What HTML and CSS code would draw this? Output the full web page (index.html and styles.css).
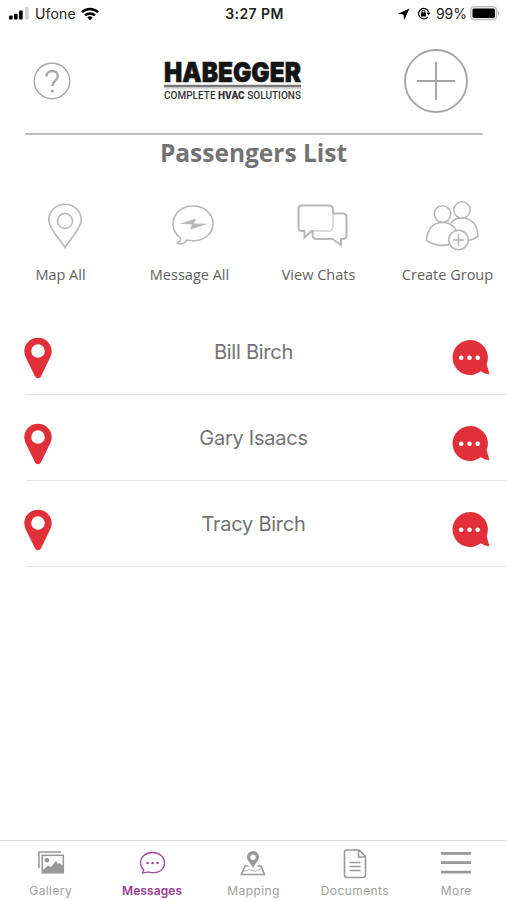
FILE: index.html
```html
<!DOCTYPE html>
<html lang="en">
<head>
<meta charset="utf-8">
<meta name="viewport" content="width=device-width">
<title>Passengers List</title>
<link rel="stylesheet" href="styles.css">
</head>
<body>
<svg class="defs" width="0" height="0" aria-hidden="true">
  <symbol id="pin" viewBox="0 0 28 42"><path fill-rule="evenodd" d="M14 .8C6.3.8.3 6.8.3 14.1c0 3 1 5.800 2.500 8.500l8.300 17c1.100 2.300 4.700 2.300 5.800 0l8.300-17c1.500-2.700 2.500-5.500 2.500-8.500C27.700 6.800 21.700.8 14 .8Zm0 6.400a6.800 6.800 0 1 1 0 13.600 6.800 6.800 0 0 1 0-13.600Z"/></symbol>
  <symbol id="bubble" viewBox="0 0 38 36"><path d="M18 0a17.500 17.500 0 1 0 10.800 31.300c2.500 1.500 5 2.800 7.400 2.900 1 0 1.100-.6.900-1.500l-2.500-8.600A17.500 17.500 0 0 0 18 0Z"/><g fill="#fff"><circle cx="9.200" cy="17.700" r="2.300"/><circle cx="17.500" cy="17.700" r="2.300"/><circle cx="25.700" cy="17.700" r="2.300"/></g></symbol>
</svg>
<div class="screen">
  <div class="status">
    <div class="carrier">
      <svg width="22" height="14" viewBox="0 0 22 14"><rect x="1" y="8.500" width="3.700" height="4" rx="1"/><rect x="6" y="6.800" width="3.700" height="5.700" rx="1"/><rect x="11" y="3.500" width="3.700" height="9" rx="1"/><rect x="17" y="0" width="3.700" height="12.500" rx="1" fill="#d4d4d4"/></svg>
      <span>Ufone</span>
      <svg width="18" height="14" viewBox="0 0 18 14" fill="none" stroke="#000" stroke-width="2.500"><path d="M1 5.200a11.700 11.700 0 0 1 16 0M4 8.400a7.300 7.300 0 0 1 10 0"/><path d="M6.300 10.400a4 4 0 0 1 5.400 0L9 13.300Z" fill="#000" stroke="none"/></svg>
    </div>
    <div class="time">3:27 PM</div>
    <div class="power">
      <svg width="12" height="12" viewBox="0 0 12 12"><path d="M11.500.5 0 5.800l5.400.8.800 5.400Z"/></svg>
      <svg class="lock" width="14" height="13" viewBox="0 0 14 13"><path d="M10.700 10.100A5.200 5.200 0 1 1 11.700 5" fill="none" stroke="#000" stroke-width="1.200"/><path d="M9.500 5.500h4l-2 3Z"/><rect x="4" y="5.600" width="5" height="4" rx=".5"/><path d="M5.100 6V4.700a1.400 1.400 0 0 1 2.800 0V6" fill="none" stroke="#000"/></svg>
      <span>99%</span>
      <svg width="31" height="15" viewBox="0 0 31 15"><rect x=".7" y=".7" width="26" height="13" rx="3.500" fill="#eee" stroke="#bcbcbc" stroke-width="1.300"/><rect x="2.500" y="2.600" width="22.500" height="9.300" rx="1.600"/><path d="M28 5v4.500c2-.9 2-3.600 0-4.500Z" fill="#aaa"/></svg>
    </div>
  </div>

  <header class="header">
    <svg class="help" width="38" height="38" viewBox="0 0 38 38" fill="none" stroke="#a7a9ac"><circle cx="19" cy="19" r="17.800" stroke-width="1.500"/><path d="M13.600 14.500c0-3.400 2.300-5.500 5.600-5.500s5.600 2 5.600 4.900c0 4.500-5.300 4.400-5.300 10.100" stroke-width="2.400"/><circle cx="19.300" cy="29" r="1.600" fill="#a7a9ac" stroke="none"/></svg>
    <svg class="logo" width="140" height="60" viewBox="0 -10 140 60">
      <text class="brand" x="1" y="21.300" textLength="137" lengthAdjust="spacingAndGlyphs">HABEGGER</text>
      <path d="M1 24.900h137" stroke="#777" stroke-width="2.400"/><path d="M1 26.900h137" stroke="#b5b5b5" stroke-width="1.200"/>
      <text class="tagline" x="1" y="38.100" textLength="137" lengthAdjust="spacing">COMPLETE <tspan class="strong">HVAC</tspan> SOLUTIONS</text>
    </svg>
    <svg class="add" width="64" height="64" viewBox="0 0 64 64" fill="none" stroke="#a3a5a9" stroke-width="1.900"><circle cx="32" cy="32" r="31"/><path d="M13 32h38M32 13v38"/></svg>
  </header>

  <h1>Passengers List</h1>

  <nav class="actions">
    <div class="action">
      <svg class="shifted" width="36" height="50" viewBox="0 0 36 50"><path d="M18 46.500C14 39.500 1.800 27.500 1.800 18.900a16.200 15.700 0 0 1 32.400 0C34.200 27.500 22 39.500 18 46.500Z"/><circle cx="18" cy="20" r="7.500"/></svg>
      <span>Map All</span>
    </div>
    <div class="action">
      <svg class="message" width="44" height="50" viewBox="0 0 44 50"><path d="M22 5C10.500 5 2 12.800 2 23c0 6 2.500 10.500 7.300 13.600.9 2.300-.7 4.400-3 4.700-.7 2.300 7.300 2.700 9.700-2.300 14.200 3 26-4.500 26-16.500C42 12.600 33.500 5 22 5Z"/><path d="M8 23 25 17.500l-2 5L37 22.800 19 28.800 21 23.200Z" fill="#b9b9b9" stroke="none"/></svg>
      <span>Message All</span>
    </div>
    <div class="action">
      <svg class="chats" width="52" height="50" viewBox="0 0 52 50"><path d="M36 12.500h9.500q4 0 4 4V34q0 4-4 4H44v6L35.500 38H20q-4.500 0-4.500-4v-4"/><path d="M36 25.500q0 4.500-4 4.500H14.500M36 13v13" stroke-width="1"/><path d="M36 13V8.500q0-4-4-4H4.500Q1.500 4.500 1.500 8v18.500Q1.500 30 5 30h2.500v6.500l7-6.500H17"/></svg>
      <span>View Chats</span>
    </div>
    <div class="action">
      <svg class="group" width="54" height="50" viewBox="0 0 54 50"><circle cx="17.500" cy="13" r="8.300"/><circle cx="37" cy="9" r="8.200"/><path d="M1.500 39.500C2 28 8 21.500 17.500 21.500c7 0 12 3.500 14.500 9M24 43.500c-8 2-16 0-22.500-4M26 22c2.500-3.500 6.500-5 11-5 10 0 16 8 16 18.500-3 2-6 3.500-9.500 4"/><circle cx="33.500" cy="39" r="9.800" fill="#fff"/><path d="M28 39h11M33.500 33.500v11"/></svg>
      <span>Create Group</span>
    </div>
  </nav>

  <main class="list">
    <div class="row"><svg class="pin" width="28" height="42"><use href="#pin"/></svg><span>Bill Birch</span><svg class="bubble" width="38" height="36"><use href="#bubble"/></svg></div>
    <div class="row"><svg class="pin" width="28" height="42"><use href="#pin"/></svg><span>Gary Isaacs</span><svg class="bubble" width="38" height="36"><use href="#bubble"/></svg></div>
    <div class="row"><svg class="pin" width="28" height="42"><use href="#pin"/></svg><span>Tracy Birch</span><svg class="bubble" width="38" height="36"><use href="#bubble"/></svg></div>
  </main>

  <footer class="tabs">
    <div class="tab">
      <svg width="28" height="32" viewBox="0 0 28 32"><path d="M2 20V4h22" fill="none" stroke="#999" stroke-width="1.500"/><rect x="5.300" y="7.300" width="21" height="17.500" fill="#fff" stroke="#999" stroke-width="1.600"/><circle cx="10" cy="12.300" r="2.300"/><path d="m6 22 5-4.500 3 1.500 5-6 2 3 1.500-1L26 18v6H6Z"/></svg>
      <span>Gallery</span>
    </div>
    <div class="tab active">
      <svg width="28" height="32" viewBox="0 0 28 32"><path d="M14.500 4.500C7.500 4.500 2.500 9 2.500 15c0 2.700 1.200 5 3.200 6.800L4.500 25.200l5.700-1.400C18.700 26.500 26.500 22.500 26.500 15 26.500 9 21.500 4.500 14.500 4.500Z" fill="none" stroke="#a54a9c" stroke-width="1.300"/><circle cx="9.500" cy="15" r="1.200"/><circle cx="14.500" cy="15" r="1.200"/><circle cx="19.500" cy="15" r="1.200"/></svg>
      <span>Messages</span>
    </div>
    <div class="tab">
      <svg width="28" height="32" viewBox="0 0 28 32"><path fill-rule="evenodd" d="M14 3a6 6 0 0 0-6 6c0 4 4.500 7 6 11 1.500-4 6-7 6-11a6 6 0 0 0-6-6Zm0 3.500a2.700 2.700 0 1 1 0 5.400 2.700 2.700 0 0 1 0-5.400Z"/><path d="M9.500 18H6L2.500 26.500h23L22 18h-3.500" fill="none" stroke="#999" stroke-width="1.700"/><path d="m5 23 6-1.500 5 2 6.500-3" fill="none" stroke="#bbb"/></svg>
      <span>Mapping</span>
    </div>
    <div class="tab">
      <svg class="document" width="28" height="32" viewBox="0 0 28 32"><path d="M5.500 2H18l6.500 6.500V27q0 2.500-2.500 2.500H6q-2.500 0-2.500-2.500V4q0-2 2-2ZM17.500 2v7h7M8.500 14.500h11M8.500 18.500h11M8.500 22.500h11"/></svg>
      <span>Documents</span>
    </div>
    <div class="tab">
      <svg width="30" height="32" viewBox="0 0 30 32" stroke="#999" stroke-width="2.700"><path d="M0 5.300h30M0 14.700h30M0 24.200h30"/></svg>
      <span>More</span>
    </div>
  </footer>
</div>
</body>
</html>
```
FILE: styles.css
```css
* { box-sizing: border-box; }
body { margin: 0; background: #fff; font-family: Inter, "Liberation Sans", sans-serif; }
svg { display: block; flex: none; }
.defs { position: absolute; }
.screen { width: 507px; height: 900px; display: flex; flex-direction: column; overflow: hidden; }

.status { height: 27px; flex: none; display: grid; grid-template-columns: 1fr auto 1fr; align-items: center; padding: 0 6px 0 8px; font-size: 14px; color: #222; }
.carrier, .power { display: flex; align-items: center; }
.carrier { gap: 5px; }
.carrier span { letter-spacing: .15px; }
.time { font-weight: 600; letter-spacing: .4px; }
.power { justify-content: flex-end; gap: 5px; }
.power .lock { margin-left: 2px; }
.power span { margin-right: -2px; }

.header { height: 108px; flex: none; margin: 0 24px 0 25px; border-bottom: 2px solid #c0c0c0; display: flex; align-items: center; padding: 1px 15px 0 8px; }
.logo { margin-left: 92px; }
.add { margin-left: auto; }
.brand { font: 900 27.500px Inter, sans-serif; fill: #151515; stroke: #151515; stroke-width: .6px; }
.tagline { font: 500 10px Roboto, sans-serif; fill: #333; }
.strong { font-weight: 900; }

h1 { margin: 0; height: 36px; flex: none; font: 700 24.500px/35px "Open Sans", sans-serif; color: #737373; text-align: center; }

.actions { display: grid; grid-template-columns: repeat(4, 129px); margin: 30px 0 0 -4px; height: 107px; flex: none; }
.action { display: flex; flex-direction: column; align-items: center; gap: 14px; font: 14.500px/20px "Open Sans", sans-serif; color: #606060; }
.action svg { fill: none; stroke: #b8b8b8; stroke-width: 1.6; }
.action .shifted, .action .chats, .action .group { margin-left: 8px; }
.action .message { margin-left: 6px; }
.action .chats { stroke-width: 2; }

.list { flex: 1; margin-top: 1px; }
.row { height: 86px; margin-left: 26px; border-bottom: 1px solid #e2e2e2; display: grid; grid-template-columns: 28px 1fr 38px; align-items: center; padding-right: 17px; }
.row span { padding-left: 1px; font-size: 20px; line-height: 24px; letter-spacing: -.25px; text-align: center; color: #737373; }
.row svg { fill: #e2303a; }
.row .pin { margin: 12px 0 0 -2px; }
.row .bubble { margin-top: 12px; }

.tabs { height: 60px; flex: none; border-top: 1px solid #dedede; display: grid; grid-template-columns: repeat(5, 1fr); }
.tab { display: flex; flex-direction: column; align-items: center; padding-top: 7px; font-size: 12px; line-height: 14px; letter-spacing: .4px; color: #a0a0a0; gap: 4px; }
.tab svg { fill: #999; }
.tab .document { fill: none; stroke: #999; stroke-width: 1.6; }
.active { color: #9b3c94; font-weight: 600; letter-spacing: .1px; }
.tab.active svg { fill: #9b3c94; }
```
